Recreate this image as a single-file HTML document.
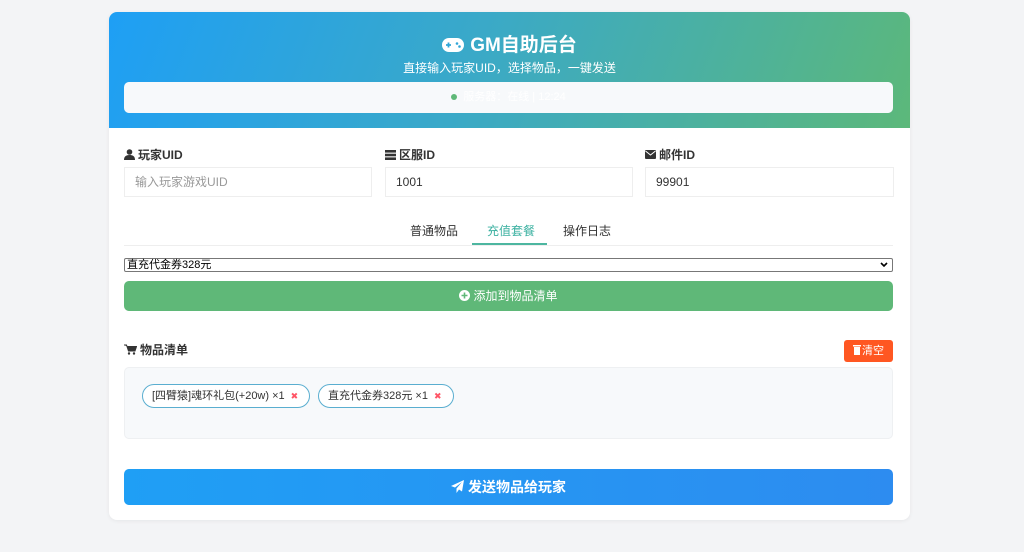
<!DOCTYPE html>
<html><head><meta charset="utf-8"><style>
*{box-sizing:border-box;margin:0;padding:0}
body{width:1024px;height:552px;background:#f3f4f6;font-family:"Liberation Sans","Noto Sans CJK SC",sans-serif;color:#333;position:relative;overflow:hidden}
.card{position:absolute;left:109px;top:12px;width:801px;height:508px;background:#fff;border-radius:8px;overflow:hidden;box-shadow:0 1px 4px rgba(0,0,0,.06)}
.hd{position:absolute;left:0;top:0;width:801px;height:116px;background:linear-gradient(110deg,#1e9ff5 0%,#3aa9c8 45%,#5cb87a 100%);color:#fff;text-align:center}
.hd h1{position:absolute;top:18px;width:100%;font-size:19px;font-weight:bold}
.hd .sub{position:absolute;top:47px;width:100%;font-size:12px}
.st{position:absolute;left:15px;top:70px;width:769px;height:31px;background:#f7f9fb;border-radius:5px;font-size:11px;line-height:31px;color:#fff}
.st i{display:inline-block;width:6px;height:6px;border-radius:50%;background:#5fb878;margin-right:6px;vertical-align:middle}
.a{position:absolute}
.lbl{font-size:12px;font-weight:bold;top:134px}
.inp{top:155px;height:30px;width:248px;border:1px solid #eee;font-size:12px;line-height:28px;padding-left:10px;color:#333}
.tab{top:210px;font-size:12px}
.btn{left:15px;width:769px;border-radius:5px;color:#fff;text-align:center}
.chip{top:372px;height:24px;border:1px solid #5aaed0;border-radius:12px;font-size:11px;line-height:22px;padding:0 9px;background:#fff;white-space:nowrap}
.chip b{color:#f56;font-size:9px;margin-left:6px;font-weight:normal}
</style></head><body>
<div class="card">
<div class="hd">
<h1><svg width="22" height="14" viewBox="0 0 22 14" style="vertical-align:-1px;margin-right:6px"><rect x="0" y="0" width="22" height="14" rx="7" fill="#fff"/><path d="M4 7h5M6.5 4.5v5" stroke="#2fa6d8" stroke-width="1.8"/><circle cx="15" cy="5.5" r="1.3" fill="#2fa6d8"/><circle cx="17.5" cy="8.5" r="1.3" fill="#2fa6d8"/></svg>GM自助后台</h1>
<div class="sub">直接输入玩家UID，选择物品，一键发送</div>
<div class="st"><i></i>服务器：在线 | 12:24</div>
</div>
<div class="a lbl" style="left:15px"><svg width="11" height="11" viewBox="0 0 11 11" style="vertical-align:-1px;margin-right:3px"><circle cx="5.5" cy="3" r="2.8" fill="#333"/><path d="M0 11c0-4 2.5-5 5.5-5s5.5 1 5.5 5z" fill="#333"/></svg>玩家UID</div>
<div class="a lbl" style="left:276px"><svg width="11" height="10" viewBox="0 0 11 10" style="vertical-align:-1px;margin-right:3px"><rect y="0" width="11" height="2.6" fill="#333"/><rect y="3.7" width="11" height="2.6" fill="#333"/><rect y="7.4" width="11" height="2.6" fill="#333"/></svg>区服ID</div>
<div class="a lbl" style="left:536px"><svg width="11" height="9" viewBox="0 0 11 9" style="vertical-align:0;margin-right:3px"><rect width="11" height="9" rx="1" fill="#333"/><path d="M0.5 1l5 4 5-4" stroke="#fff" fill="none"/></svg>邮件ID</div>
<div class="a inp" style="left:15px;color:#999">输入玩家游戏UID</div>
<div class="a inp" style="left:276px;width:248px">1001</div>
<div class="a inp" style="left:536px;width:249px">99901</div>
<div class="a tab" style="left:301px">普通物品</div>
<div class="a tab" style="left:378px;color:#3ab0a0">充值套餐</div>
<div class="a tab" style="left:454px">操作日志</div>
<div class="a" style="left:15px;top:233px;width:769px;height:1px;background:#eee"></div>
<div class="a" style="left:363px;top:231px;width:75px;height:2px;background:#4db6a0"></div>
<div class="a" style="left:15px;top:246px;width:769px;height:14px;border:1px solid #777;border-radius:2px;font-size:11px;line-height:12px;padding-left:2px;color:#000">直充代金券328元<svg width="8" height="6" viewBox="0 0 8 6" style="position:absolute;right:4px;top:3px"><path d="M1 1l3 3 3-3" stroke="#000" stroke-width="1.6" fill="none"/></svg></div>
<div class="a btn" style="top:269px;height:30px;background:#5fb878;font-size:12px;line-height:30px"><svg width="11" height="11" viewBox="0 0 11 11" style="vertical-align:-1px;margin-right:3px"><circle cx="5.5" cy="5.5" r="5.5" fill="#fff"/><path d="M5.5 2.5v6M2.5 5.5h6" stroke="#5fb878" stroke-width="1.6"/></svg>添加到物品清单</div>
<div class="a" style="left:15px;top:329px;font-size:12px;font-weight:bold"><svg width="13" height="11" viewBox="0 0 13 11" style="vertical-align:-1px;margin-right:3px"><path d="M0 1h2.5l2 6h6.5l1.5-4.5H3.5" fill="#333" stroke="#333" stroke-width="1"/><circle cx="5" cy="9.5" r="1.2" fill="#333"/><circle cx="10" cy="9.5" r="1.2" fill="#333"/></svg>物品清单</div>
<div class="a" style="left:735px;top:328px;width:49px;height:22px;background:#ff5722;border-radius:3px;color:#fff;font-size:11px;line-height:22px;text-align:center"><svg width="8" height="10" viewBox="0 0 8 10" style="vertical-align:-1px;margin-right:1px"><rect x="0" y="0" width="8" height="1.5" fill="#fff"/><rect x="1" y="2" width="6" height="8" fill="#fff"/></svg>清空</div>
<div class="a" style="left:15px;top:355px;width:769px;height:72px;background:#f7f9fb;border:1px solid #eef0f2;border-radius:5px"></div>
<div class="a chip" style="left:33px;width:168px">[四臂猿]魂环礼包(+20w) ×1<b>✖</b></div>
<div class="a chip" style="left:209px;width:136px">直充代金券328元 ×1<b>✖</b></div>
<div class="a btn" style="top:457px;height:36px;background:linear-gradient(90deg,#1f9ff5,#2d8cf0);font-size:14px;font-weight:bold;line-height:36px"><svg width="13" height="13" viewBox="0 0 13 13" style="vertical-align:-1px;margin-right:4px"><path d="M13 0L0 6l4 1.5L11 2 5.5 8.5V13l2.5-3.5 3 2z" fill="#fff"/></svg>发送物品给玩家</div>
</div>
</body></html>
